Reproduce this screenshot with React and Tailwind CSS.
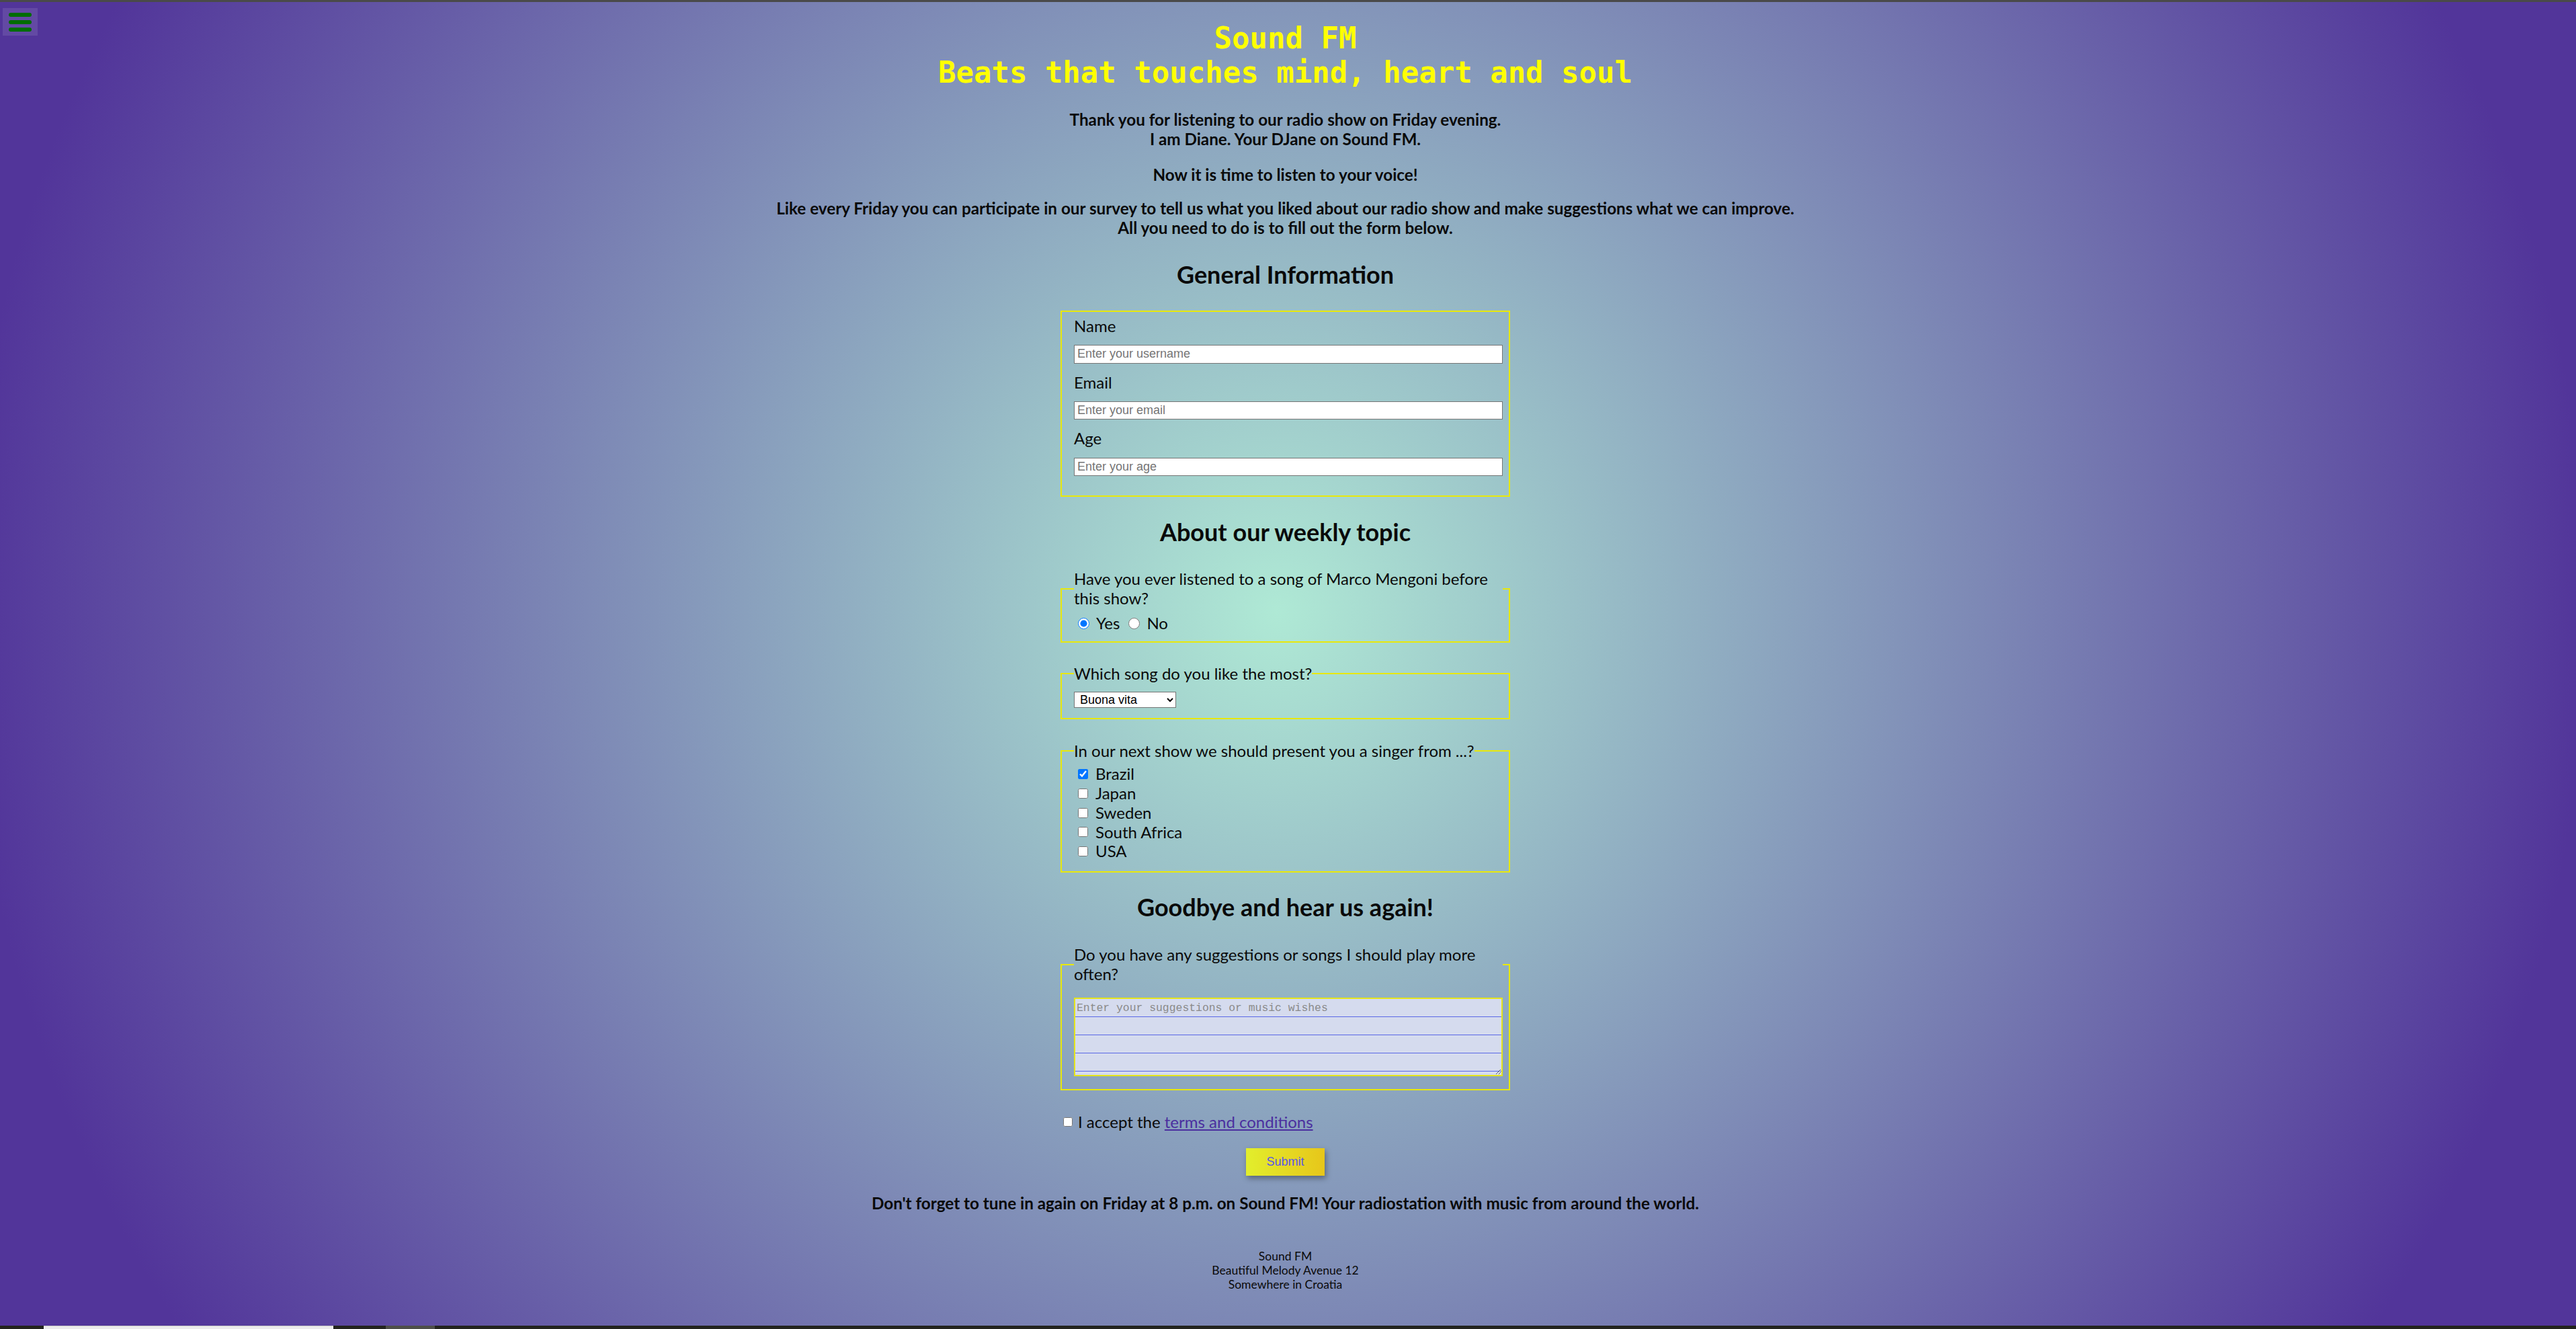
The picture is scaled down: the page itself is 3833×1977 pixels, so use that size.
import React from "react";

const countries = ["Brazil", "Japan", "Sweden", "South Africa", "USA"];

function Field({ label, placeholder }) {
  return (
    <div className="mb-[14px]">
      <label className="block text-[24px] leading-[28.8px]">{label}</label>
      <input
        type="text"
        placeholder={placeholder}
        className="mt-[13.5px] block w-full h-[27.4px] bg-white border border-[#767676] px-[4px] text-[18px] font-['Liberation_Sans',Arial,sans-serif] text-black placeholder:text-[#757575]"
      />
    </div>
  );
}

export default function App() {
  return (
    <div className="relative min-h-screen flex flex-col font-['Lato',sans-serif] text-[#0a0a0a] bg-[radial-gradient(circle_at_1900px_910px,#afe9d5_0px,#52359a_1950px)]">
      {/* top edge */}
      <div className="h-[3px] w-full bg-[#4a4a4a]" />

      {/* menu button */}
      <button className="absolute left-[4px] top-[12px] w-[52px] h-[41px] bg-white/10 flex flex-col items-center justify-center gap-[5px]">
        <span className="block w-[34px] h-[6px] rounded-full bg-[#006d00]" />
        <span className="block w-[34px] h-[6px] rounded-full bg-[#006d00]" />
        <span className="block w-[34px] h-[6px] rounded-full bg-[#006d00]" />
      </button>

      <main className="flex-1 flex flex-col items-center pr-[8px]">
        <h1 className="mt-[28px] text-center text-[44px] leading-[51px] font-bold text-[#ffff00] font-['DejaVu_Sans_Mono',monospace]">
          Sound FM
          <br />
          Beats that touches mind, heart and soul
        </h1>

        <p className="mt-[31px] text-center text-[24.25px] leading-[28.8px] font-bold">
          Thank you for listening to our radio show on Friday evening.
          <br />
          I am Diane. Your DJane on Sound FM.
        </p>
        <p className="mt-[24px] text-center text-[24.25px] leading-[28.8px] font-bold">
          Now it is time to listen to your voice!
        </p>
        <p className="mt-[22px] text-center text-[24.25px] leading-[28.8px] font-bold">
          Like every Friday you can participate in our survey to tell us what you liked about our radio show and make suggestions what we can improve.
          <br />
          All you need to do is to fill out the form below.
        </p>

        <form className="w-[669px] flex flex-col" onSubmit={(e) => e.preventDefault()}>
          <h2 className="mt-[33px] text-center text-[36px] leading-[43px] font-bold">General Information</h2>

          {/* ── general ── */}
          <fieldset className="mt-[32px] border-2 border-[#e8e80c] pt-[7px] pl-[18px] pr-[9px] pb-[15px]">
            <Field label="Name" placeholder="Enter your username" />
            <Field label="Email" placeholder="Enter your email" />
            <Field label="Age" placeholder="Enter your age" />
          </fieldset>

          <h2 className="mt-[31px] text-center text-[36px] leading-[43px] font-bold">About our weekly topic</h2>

          {/* ── weekly topic ── */}
          <fieldset className="mt-[34px] border-2 border-[#e8e80c] pl-[18px] pr-[9px] pb-[12.5px]">
            <legend className="text-[24px] leading-[28.8px]">
              Have you ever listened to a song of Marco Mengoni before this show?
            </legend>
            <div className="mt-[8.5px] flex items-center text-[24px] leading-[28.8px]">
              <input type="radio" name="heard" defaultChecked className="w-[17px] h-[17px] ml-[6px] mr-[10px]" />
              <span>Yes</span>
              <input type="radio" name="heard" className="w-[17px] h-[17px] ml-[13px] mr-[10px]" />
              <span>No</span>
            </div>
          </fieldset>

          <fieldset className="mt-[31.5px] border-2 border-[#e8e80c] pl-[18px] pr-[9px] pb-[15px]">
            <legend className="text-[24px] leading-[28.8px]">Which song do you like the most?</legend>
            <select
              defaultValue="buona"
              className="mt-[12.7px] block w-[152px] h-[24px] bg-white border border-[#767676] pl-[4px] text-[18px] text-black font-['Liberation_Sans',Arial,sans-serif]"
            >
              <option value="buona">Buona vita</option>
              <option value="esseri">Esseri umani</option>
              <option value="guerriero">Guerriero</option>
            </select>
          </fieldset>

          <fieldset className="mt-[32.5px] border-2 border-[#e8e80c] pl-[18px] pr-[9px] pb-[15.3px]">
            <legend className="text-[24px] leading-[28.8px]">In our next show we should present you a singer from ...?</legend>
            <div className="mt-[5.4px] flex flex-col">
              {countries.map((c, i) => (
                <label key={c} className="flex items-center text-[24px] leading-[28.8px]">
                  <input type="checkbox" defaultChecked={i === 0} className="w-[15px] h-[15px] ml-[6px] mr-[11px]" />
                  {c}
                </label>
              ))}
            </div>
          </fieldset>

          <h2 className="mt-[30px] text-center text-[36px] leading-[43px] font-bold">Goodbye and hear us again!</h2>

          {/* ── wishes ── */}
          <fieldset className="mt-[35px] border-2 border-[#e8e80c] pl-[18px] pr-[9px] pb-[19px]">
            <legend className="text-[24px] leading-[28.8px]">
              Do you have any suggestions or songs I should play more often?
            </legend>
            <textarea
              placeholder="Enter your suggestions or music wishes"
              className="mt-[20.4px] block w-full h-[117px] border-2 border-[#e4e41c] px-[2px] text-[16.4px] leading-[27px] font-['Liberation_Mono',monospace] text-black placeholder:text-[#8a8a8a] bg-[#d5dbee] bg-[linear-gradient(transparent_26px,#5a68e6_26px,#5a68e6_27px)] bg-[length:100%_27px] bg-local"
            />
          </fieldset>

          <div className="mt-[32.5px] flex items-center text-[24px] leading-[28.8px]">
            <input type="checkbox" className="w-[14px] h-[14px] ml-[4px] mr-[8px]" />
            <span>
              I accept the{" "}
              <a href="#terms" className="text-[#4b2f9f] underline">terms and conditions</a>
            </span>
          </div>

          <button
            type="submit"
            className="mt-[24.7px] self-center w-[117px] h-[41px] bg-[linear-gradient(to_right,#e2ee2c,#e7c61a)] text-[#5a55e6] text-[18px] font-['Liberation_Sans',Arial,sans-serif] shadow-[2px_4px_8px_rgba(0,0,0,0.35)]"
          >
            Submit
          </button>
        </form>

        <p className="mt-[26.5px] text-center text-[24.25px] leading-[28.8px] font-bold">
          Don't forget to tune in again on Friday at 8 p.m. on Sound FM! Your radiostation with music from around the world.
        </p>

        <footer className="mt-[53px] text-center text-[17.5px] leading-[21px]">
          <div>Sound FM</div>
          <div>Beautiful Melody Avenue 12</div>
          <div>Somewhere in Croatia</div>
        </footer>
      </main>

      {/* bottom edge */}
      <div className="mt-auto flex h-[5px] w-full bg-[#23241f]">
        <div className="w-[65px]" />
        <div className="w-[431px] bg-[#ececec] border-t border-[#c6c6c6]" />
        <div className="w-[78px]" />
        <div className="w-[73px] bg-[#4e4f4a]" />
      </div>
    </div>
  );
}
